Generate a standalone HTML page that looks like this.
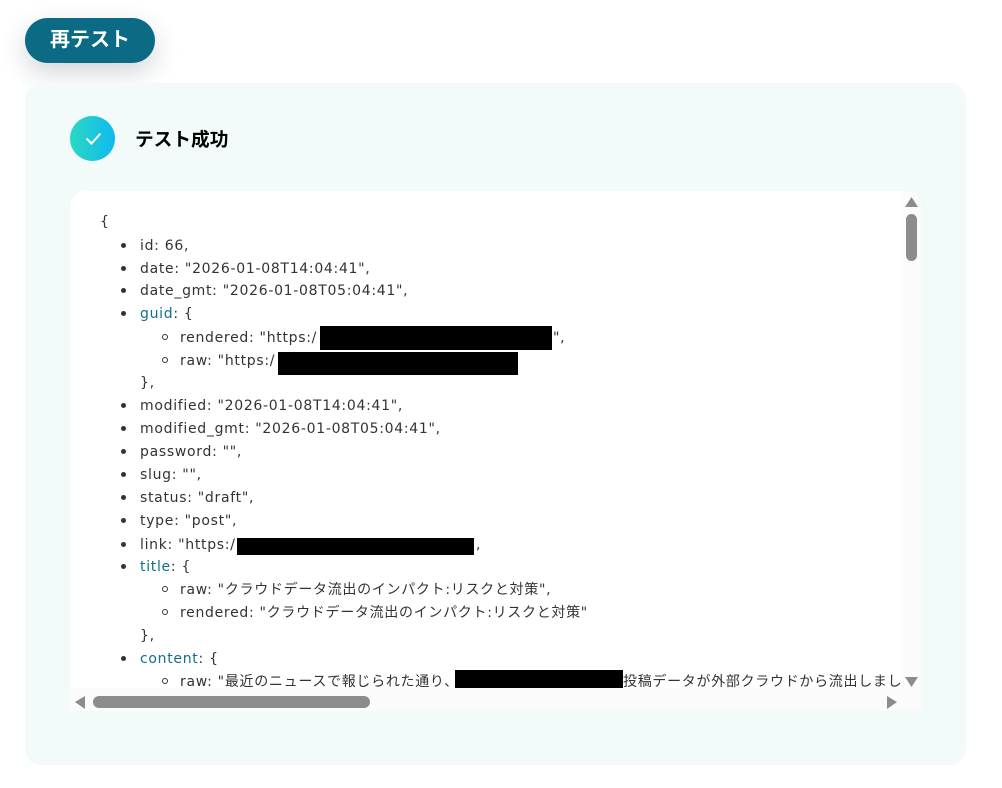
<!DOCTYPE html>
<html lang="ja"><head><meta charset="utf-8"><title>テスト成功</title>
<style>
*{box-sizing:border-box}
html,body{margin:0;padding:0;width:1002px;height:788px;overflow:hidden;background:#fff}
body{position:relative;font-family:"Liberation Sans","Noto Sans CJK JP",sans-serif}
.btn{position:absolute;left:25px;top:18px;width:130px;height:45px;border-radius:23px;background:#0b6a84;color:#fff;font-weight:700;font-size:20px;line-height:44px;text-align:center;box-shadow:0 10px 26px rgba(30,50,70,.2)}
.panel{position:absolute;left:25px;top:83px;width:941px;height:682px;border-radius:16px;background:#f2fbfa}
.circle{position:absolute;left:70px;top:116px;width:45px;height:45px;border-radius:50%;background:linear-gradient(90deg,#2ad8c2,#10b9ee)}
.h{position:absolute;left:135px;top:127px;font-size:18.7px;line-height:26px;font-weight:700;color:#000}
.box{position:absolute;left:70px;top:191px;width:851px;height:520px;background:#fff;border-radius:16px 16px 0 0;overflow:hidden}
.vt{position:absolute;right:0;top:0;width:19px;height:520px;background:#fcfbfc}
.ht{position:absolute;left:0;bottom:0;width:851px;height:23px;background:#fcfbfc}
.view{position:absolute;left:0;top:0;width:832px;height:497px;overflow:hidden}
.l{position:absolute;white-space:nowrap;font-family:"DejaVu Sans","Noto Sans CJK JP",sans-serif;font-size:14px;line-height:22px;color:#333;height:22px;letter-spacing:.7px;margin-top:1px}
.l b{font-weight:400;color:#10708a}
.d{position:absolute;width:5px;height:5px;border-radius:50%;background:#333}
.c{position:absolute;width:6px;height:6px;border-radius:50%;border:1px solid #333}
.r{position:absolute;background:#000}
</style></head><body>
<div class="btn">再テスト</div>
<div class="panel"></div>
<div class="circle"><svg width="45" height="45" viewBox="0 0 45 45"><path d="M16.500 22.500l5 5 9-10" fill="none" stroke="#fff" stroke-width="2"/></svg></div>
<div class="h">テスト成功</div>
<div class="box">
<div class="view">
<div class="l" style="left:30px;top:19px">{</div>
<i class="d" style="left:51px;top:52px"></i><div class="l" style="left:70px;top:43px">id: 66,</div>
<i class="d" style="left:51px;top:75px"></i><div class="l" style="left:70px;top:66px">date: "2026-01-08T14:04:41",</div>
<i class="d" style="left:51px;top:97px"></i><div class="l" style="left:70px;top:88px">date_gmt: "2026-01-08T05:04:41",</div>
<i class="d" style="left:51px;top:120px"></i><div class="l" style="left:70px;top:111px"><b>guid</b>: {</div>
<i class="c" style="left:92px;top:143px"></i><div class="l" style="left:110px;top:135px">rendered: "https:/</div><div class="l" style="left:483px;top:135px">",</div>
<i class="c" style="left:92px;top:166px"></i><div class="l" style="left:110px;top:158px">raw: "https:/</div>
<div class="l" style="left:70px;top:180px">},</div>
<i class="d" style="left:51px;top:212px"></i><div class="l" style="left:70px;top:203px">modified: "2026-01-08T14:04:41",</div>
<i class="d" style="left:51px;top:235px"></i><div class="l" style="left:70px;top:226px">modified_gmt: "2026-01-08T05:04:41",</div>
<i class="d" style="left:51px;top:258px"></i><div class="l" style="left:70px;top:249px">password: "",</div>
<i class="d" style="left:51px;top:281px"></i><div class="l" style="left:70px;top:272px">slug: "",</div>
<i class="d" style="left:51px;top:304px"></i><div class="l" style="left:70px;top:295px">status: "draft",</div>
<i class="d" style="left:51px;top:327px"></i><div class="l" style="left:70px;top:318px">type: "post",</div>
<i class="d" style="left:51px;top:351px"></i><div class="l" style="left:70px;top:342px">link: "https:/</div><div class="l" style="left:406px;top:342px">,</div>
<i class="d" style="left:51px;top:373px"></i><div class="l" style="left:70px;top:364px"><b>title</b>: {</div>
<i class="c" style="left:92px;top:395px"></i><div class="l" style="left:110px;top:387px">raw: "クラウドデータ流出のインパクト:リスクと対策",</div>
<i class="c" style="left:92px;top:418px"></i><div class="l" style="left:110px;top:410px">rendered: "クラウドデータ流出のインパクト:リスクと対策"</div>
<div class="l" style="left:70px;top:433px">},</div>
<i class="d" style="left:51px;top:465px"></i><div class="l" style="left:70px;top:456px"><b>content</b>: {</div>
<i class="c" style="left:92px;top:487px"></i><div class="l" style="left:110px;top:479px">raw: "最近のニュースで報じられた通り、</div><div class="l" style="left:553px;top:479px">投稿データが外部クラウドから流出しました。</div>
<div class="r" style="left:250px;top:135px;width:232px;height:24px"></div>
<div class="r" style="left:208px;top:161px;width:240px;height:23px"></div>
<div class="r" style="left:167px;top:347px;width:237px;height:17px"></div>
<div class="r" style="left:385px;top:479px;width:168px;height:22px"></div>
</div>
<div class="vt"></div><div class="ht"></div>
<svg style="position:absolute;left:0;top:0" width="851" height="520" viewBox="0 0 851 520">
<path d="M835 16L848 16L841.500 6Z" fill="#8c8c8c"/>
<rect x="836" y="23" width="11" height="47" rx="5.500" fill="#8c8c8c"/>
<path d="M835 486L848 486L841.500 496Z" fill="#8c8c8c"/>
<path d="M5 511L15 505L15 518Z" fill="#8c8c8c"/>
<rect x="23" y="505" width="277" height="12" rx="6" fill="#8c8c8c"/>
<path d="M817 505L827 511L817 518Z" fill="#8c8c8c"/>
</svg>
</div>
</body></html>
